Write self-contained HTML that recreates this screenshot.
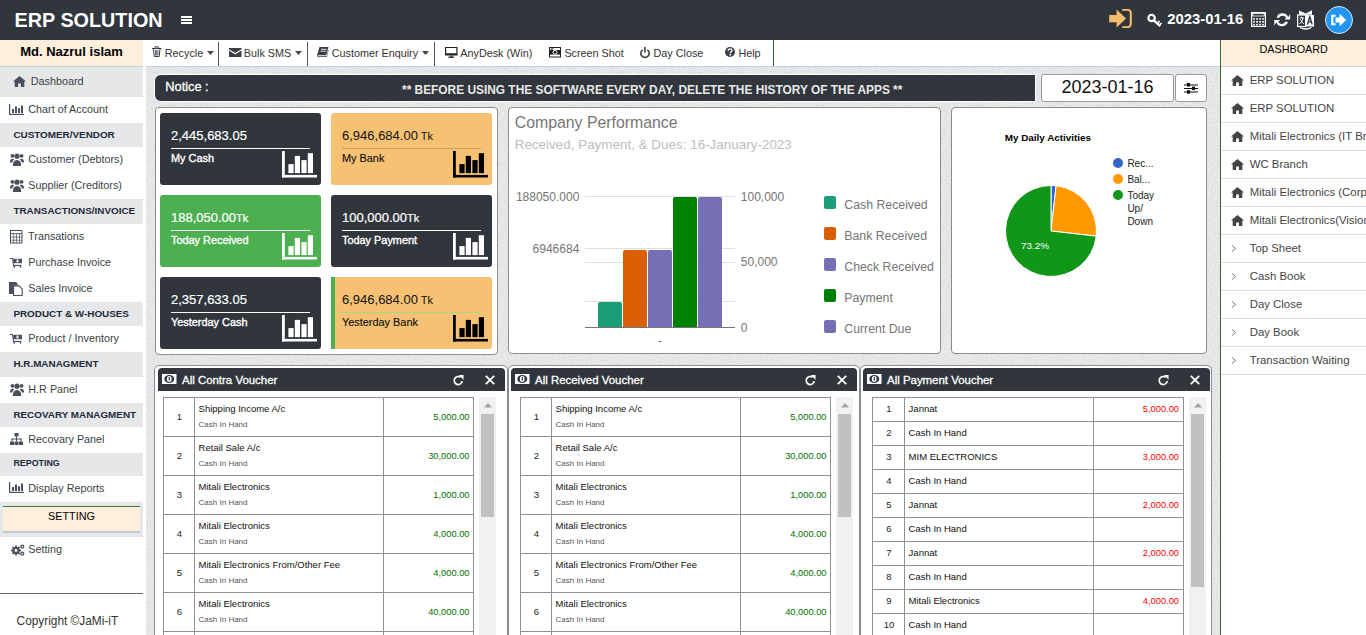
<!DOCTYPE html>
<html><head><meta charset="utf-8"><style>
*{box-sizing:border-box;margin:0;padding:0}
html,body{width:1366px;height:635px;overflow:hidden;background:#fff;font-family:"Liberation Sans",sans-serif;color:#333}
.a{position:absolute}
.t{position:absolute;white-space:nowrap}
svg{position:absolute;overflow:visible}
</style></head><body>
<div class="a" style="left:0px;top:0px;width:1366px;height:40px;background:#31363d"></div>
<div class="t" style="left:14.60px;top:7.74px;font-size:19.8px;line-height:25px;color:#fff;font-weight:bold;">ERP SOLUTION</div>
<div class="a" style="left:181px;top:16px;width:11px;height:2px;background:#fff"></div>
<div class="a" style="left:181px;top:19px;width:11px;height:2px;background:#fff"></div>
<div class="a" style="left:181px;top:22px;width:11px;height:2px;background:#fff"></div>
<svg class="a" style="left:1108.8px;top:9px;" width="23.5" height="19.5" viewBox="0 0 23.5 19.5"><g fill="#f5bd6c"><path d="M0.2 6 L7.6 6 L7.6 0.5 L17 9.5 L7.6 18.5 L7.6 13.3 L0.2 13.3 Z"/><path d="M13.2 0 L18.5 0 Q22.8 0 22.8 4.2 L22.8 14.8 Q22.8 19 18.5 19 L13.2 19 L13.2 17.2 L18.5 17.2 Q20.8 17.2 20.8 14.8 L20.8 4.2 Q20.8 1.8 18.5 1.8 L13.2 1.8 Z"/></g></svg>
<svg class="a" style="left:1146.7px;top:12.8px;" width="16" height="14" viewBox="0 0 16 14"><g fill="none" stroke="#fff"><circle cx="4.6" cy="5" r="3.2" stroke-width="2.2"/><path d="M7 7.4 L13.2 13.2" stroke-width="2.4"/><path d="M10.2 10.4 L12.6 8.2 M12.2 12.2 L14.6 10" stroke-width="1.6"/></g><circle cx="3.9" cy="4.3" r="1" fill="#31363d"/></svg>
<div class="t" style="left:1167.20px;top:10.25px;font-size:14.86px;line-height:19px;color:#fff;font-weight:bold;">2023-01-16</div>
<svg class="a" style="left:1251px;top:12px;" width="15" height="15" viewBox="0 0 15 15"><rect x="0.6" y="0.6" width="13.8" height="13.8" fill="none" stroke="#fff" stroke-width="1.2"/><rect x="1.2" y="1.2" width="12.6" height="3.2" fill="#fff"/><rect x="2.2" y="2" width="10.6" height="1.6" fill="#31363d"/><rect x="2.2" y="6.2" width="1.7" height="1.6" fill="#fff"/><rect x="2.2" y="9.0" width="1.7" height="1.6" fill="#fff"/><rect x="2.2" y="11.8" width="1.7" height="1.6" fill="#fff"/><rect x="5.2" y="6.2" width="1.7" height="1.6" fill="#fff"/><rect x="5.2" y="9.0" width="1.7" height="1.6" fill="#fff"/><rect x="5.2" y="11.8" width="1.7" height="1.6" fill="#fff"/><rect x="8.2" y="6.2" width="1.7" height="1.6" fill="#fff"/><rect x="8.2" y="9.0" width="1.7" height="1.6" fill="#fff"/><rect x="8.2" y="11.8" width="1.7" height="1.6" fill="#fff"/><rect x="11.2" y="6.2" width="1.7" height="1.6" fill="#fff"/><rect x="11.2" y="9.0" width="1.7" height="1.6" fill="#fff"/><rect x="11.2" y="11.8" width="1.7" height="1.6" fill="#fff"/></svg>
<svg class="a" style="left:1274px;top:11.7px;" width="16.5" height="15.6" viewBox="0 0 16.5 15.6"><g fill="#fff"><path d="M14.3 5.3 A6.3 6.3 0 0 0 2.5 5.5 L5 6 A4 4 0 0 1 12.2 5.9 L10.4 7.6 L16.2 7.6 L16.2 1.8 Z"/><path d="M2.2 10.3 A6.3 6.3 0 0 0 14 10.1 L11.5 9.6 A4 4 0 0 1 4.3 9.7 L6.1 8 L0.3 8 L0.3 13.8 Z"/></g></svg>
<svg class="a" style="left:1297px;top:10px;" width="17.5" height="19.5" viewBox="0 0 17.5 19.5"><path fill="#fff" d="M2 0.5 L8.7 3.6 L15 0.3 L15 4.8 L2 4.8 Z"/><rect x="0.6" y="5" width="8" height="11.5" fill="none" stroke="#fff" stroke-width="1.2"/><rect x="8.6" y="5" width="8.4" height="11.5" fill="#fff"/><path fill="none" stroke="#31363d" stroke-width="1.3" d="M10.4 14.5 L12.8 6.8 L15.2 14.5 M11.2 11.8 L14.4 11.8"/><path fill="none" stroke="#fff" stroke-width="1" d="M2.5 8 L6.8 8 M4.6 6.6 L4.6 8 M6 8 Q5 12.5 2.5 14 M3.3 9.5 Q4.8 12.8 6.8 13.8"/><path fill="none" stroke="#fff" stroke-width="1.3" d="M3 17.5 Q8.8 20.5 14.5 17.5"/></svg>
<svg class="a" style="left:1325px;top:5.5px;" width="28" height="28" viewBox="0 0 28 28"><circle cx="14" cy="14" r="13.5" fill="#2196f3" stroke="#e8f2fb" stroke-width="0.9"/><g fill="#fff"><path d="M6.2 8.8 L10.5 8.8 L10.5 10.8 L8.4 10.8 L8.4 17.2 L10.5 17.2 L10.5 19.2 L6.2 19.2 Z"/><path d="M10.5 11.6 L14.6 11.6 L14.6 7.8 L21.2 14 L14.6 20.2 L14.6 16.4 L10.5 16.4 Z"/></g></svg>
<div class="a" style="left:0px;top:40px;width:143px;height:595px;background:#fff"></div>
<div class="a" style="left:0px;top:40px;width:143px;height:26px;background:#fdefdc"></div>
<div class="a" style="left:0px;top:66px;width:143px;height:1px;background:#c9d0dd"></div>
<div class="t" style="left:-228.50px;width:600px;text-align:center;top:44.29px;font-size:13px;line-height:16px;color:#000;font-weight:bold;">Md. Nazrul islam</div>
<div class="a" style="left:0px;top:67px;width:143px;height:30px;background:#e6e7e8"></div>
<svg class="a" style="left:13px;top:76px;" width="13" height="11" viewBox="0 0 13 11"><path fill="#4a5059" d="M6.5 0 L13 5.6 L11.3 5.6 L11.3 11 L7.9 11 L7.9 7.5 L5.1 7.5 L5.1 11 L1.7 11 L1.7 5.6 L0 5.6 Z"/></svg>
<div class="t" style="left:30.70px;top:74.06px;font-size:10.8px;line-height:14px;color:#3a3f45;">Dashboard</div>
<svg class="a" style="left:9px;top:104px;" width="15" height="11" viewBox="0 0 15 11"><g fill="#4a5059"><rect x="0" y="0" width="1.2" height="11"/><rect x="0" y="9.8" width="15" height="1.2"/><rect x="3" y="5" width="2" height="4"/><rect x="6" y="2.5" width="2" height="6.5"/><rect x="9" y="4.2" width="2" height="4.8"/><rect x="12" y="1.5" width="2" height="7.5"/></g></svg>
<div class="t" style="left:28.30px;top:101.96px;font-size:10.8px;line-height:14px;color:#3a3f45;">Chart of Account</div>
<div class="a" style="left:0px;top:123px;width:143px;height:24px;background:#e6e7e8"></div>
<div class="t" style="left:13.40px;top:128.67px;font-size:9.9px;line-height:12px;color:#1d2a3a;font-weight:bold;">CUSTOMER/VENDOR</div>
<svg class="a" style="left:9.8px;top:152.8px;" width="14" height="13" viewBox="0 0 14 13"><g fill="#4a5059"><circle cx="7" cy="3.2" r="2.6"/><path d="M2.8 13 Q2.8 7 7 7 Q11.2 7 11.2 13 Z"/><circle cx="2.4" cy="2.8" r="1.9"/><circle cx="11.6" cy="2.8" r="1.9"/><path d="M0 9.5 Q0 5.8 2.6 5.8 Q3.8 5.8 4.2 6.4 Q2.4 7.6 2.2 9.5 Z"/><path d="M14 9.5 Q14 5.8 11.4 5.8 Q10.2 5.8 9.8 6.4 Q11.6 7.6 11.8 9.5 Z"/></g></svg>
<div class="t" style="left:28.30px;top:151.86px;font-size:10.8px;line-height:14px;color:#3a3f45;">Customer (Debtors)</div>
<svg class="a" style="left:9.8px;top:178.7px;" width="14" height="13" viewBox="0 0 14 13"><g fill="#4a5059"><circle cx="7" cy="3.2" r="2.6"/><path d="M2.8 13 Q2.8 7 7 7 Q11.2 7 11.2 13 Z"/><circle cx="2.4" cy="2.8" r="1.9"/><circle cx="11.6" cy="2.8" r="1.9"/><path d="M0 9.5 Q0 5.8 2.6 5.8 Q3.8 5.8 4.2 6.4 Q2.4 7.6 2.2 9.5 Z"/><path d="M14 9.5 Q14 5.8 11.4 5.8 Q10.2 5.8 9.8 6.4 Q11.6 7.6 11.8 9.5 Z"/></g></svg>
<div class="t" style="left:28.30px;top:177.76px;font-size:10.8px;line-height:14px;color:#3a3f45;">Supplier (Creditors)</div>
<div class="a" style="left:0px;top:199px;width:143px;height:25px;background:#e6e7e8"></div>
<div class="t" style="left:13.40px;top:205.07px;font-size:9.9px;line-height:12px;color:#1d2a3a;font-weight:bold;">TRANSACTIONS/INVOICE</div>
<svg class="a" style="left:9.7px;top:229.7px;" width="13" height="14" viewBox="0 0 13 14"><rect x="0.5" y="0.5" width="11.5" height="12.5" fill="none" stroke="#4a5059" stroke-width="1"/><rect x="0.5" y="3.2" width="11.5" height="0.9" fill="#4a5059"/><rect x="0.5" y="6.7" width="11.5" height="0.7" fill="#4a5059"/><rect x="0.5" y="9.8" width="11.5" height="0.7" fill="#4a5059"/><rect x="3.4" y="3.6" width="0.7" height="9.4" fill="#4a5059"/><rect x="6.2" y="3.6" width="0.7" height="9.4" fill="#4a5059"/><rect x="9.1" y="3.6" width="0.7" height="9.4" fill="#4a5059"/></svg>
<div class="t" style="left:28.10px;top:229.06px;font-size:10.8px;line-height:14px;color:#3a3f45;">Transations</div>
<svg class="a" style="left:10px;top:258px;" width="13" height="11" viewBox="0 0 13 11"><g fill="#4a5059"><path d="M0 0 L2.9 0 L4.2 8.4 L3.2 8.4 L2.1 1 L0 1 Z"/><rect x="3.2" y="0.8" width="8.8" height="4.4"/><rect x="3.6" y="6.9" width="7.6" height="1.1"/><rect x="3.6" y="7.5" width="1.3" height="2.2"/><rect x="9.9" y="7.5" width="1.3" height="2.2"/></g><ellipse cx="7.5" cy="3" rx="1.3" ry="1.7" fill="#d8dde2"/></svg>
<div class="t" style="left:28.30px;top:255.16px;font-size:10.8px;line-height:14px;color:#3a3f45;">Purchase Invoice</div>
<svg class="a" style="left:9.4px;top:282px;" width="14" height="14" viewBox="0 0 14 14"><path fill="#4a5059" d="M0 0 L7 0 L8.5 1.5 L8.5 3.5 L4 3.5 L4 12 L0 12 Z"/><path fill="#fff" stroke="#4a5059" stroke-width="1.1" d="M4.6 3.9 L10 3.9 L13.2 7.1 L13.2 13.5 L4.6 13.5 Z"/></svg>
<div class="t" style="left:28.30px;top:280.86px;font-size:10.8px;line-height:14px;color:#3a3f45;">Sales Invoice</div>
<div class="a" style="left:0px;top:302px;width:143px;height:24px;background:#e6e7e8"></div>
<div class="t" style="left:13.40px;top:308.07px;font-size:9.9px;line-height:12px;color:#1d2a3a;font-weight:bold;">PRODUCT &amp; W-HOUSES</div>
<svg class="a" style="left:10px;top:334px;" width="13" height="11" viewBox="0 0 13 11"><g fill="#4a5059"><path d="M0 0 L2.9 0 L4.2 8.4 L3.2 8.4 L2.1 1 L0 1 Z"/><rect x="3.2" y="0.8" width="8.8" height="4.4"/><rect x="3.6" y="6.9" width="7.6" height="1.1"/><rect x="3.6" y="7.5" width="1.3" height="2.2"/><rect x="9.9" y="7.5" width="1.3" height="2.2"/></g><ellipse cx="7.5" cy="3" rx="1.3" ry="1.7" fill="#d8dde2"/></svg>
<div class="t" style="left:28.30px;top:331.16px;font-size:10.8px;line-height:14px;color:#3a3f45;">Product / Inventory</div>
<div class="a" style="left:0px;top:352px;width:143px;height:25px;background:#e6e7e8"></div>
<div class="t" style="left:13.40px;top:358.17px;font-size:9.9px;line-height:12px;color:#1d2a3a;font-weight:bold;">H.R.MANAGMENT</div>
<svg class="a" style="left:9.8px;top:383px;" width="14" height="13" viewBox="0 0 14 13"><g fill="#4a5059"><circle cx="7" cy="3.2" r="2.6"/><path d="M2.8 13 Q2.8 7 7 7 Q11.2 7 11.2 13 Z"/><circle cx="2.4" cy="2.8" r="1.9"/><circle cx="11.6" cy="2.8" r="1.9"/><path d="M0 9.5 Q0 5.8 2.6 5.8 Q3.8 5.8 4.2 6.4 Q2.4 7.6 2.2 9.5 Z"/><path d="M14 9.5 Q14 5.8 11.4 5.8 Q10.2 5.8 9.8 6.4 Q11.6 7.6 11.8 9.5 Z"/></g></svg>
<div class="t" style="left:28.30px;top:382.26px;font-size:10.8px;line-height:14px;color:#3a3f45;">H.R Panel</div>
<div class="a" style="left:0px;top:403px;width:143px;height:24px;background:#e6e7e8"></div>
<div class="t" style="left:13.40px;top:408.87px;font-size:9.9px;line-height:12px;color:#1d2a3a;font-weight:bold;">RECOVARY MANAGMENT</div>
<svg class="a" style="left:9.5px;top:433px;" width="13" height="12" viewBox="0 0 13 12"><g fill="#4a5059"><rect x="4.5" y="0" width="4" height="3.5"/><rect x="6" y="3.5" width="1" height="2.5"/><rect x="1.5" y="5.5" width="10" height="1"/><rect x="1.5" y="5.5" width="1" height="3"/><rect x="6" y="5.5" width="1" height="3"/><rect x="10.5" y="5.5" width="1" height="3"/><rect x="0" y="8.5" width="4" height="3.5"/><rect x="4.5" y="8.5" width="4" height="3.5"/><rect x="9" y="8.5" width="4" height="3.5"/></g></svg>
<div class="t" style="left:28.30px;top:432.46px;font-size:10.8px;line-height:14px;color:#3a3f45;">Recovary Panel</div>
<div class="a" style="left:0px;top:453px;width:143px;height:23px;background:#e6e7e8"></div>
<div class="t" style="left:13.40px;top:458.31px;font-size:8.9px;line-height:11px;color:#1d2a3a;font-weight:bold;">REPOTING</div>
<svg class="a" style="left:9px;top:482px;" width="15" height="11" viewBox="0 0 15 11"><g fill="#4a5059"><rect x="0" y="0" width="1.2" height="11"/><rect x="0" y="9.8" width="15" height="1.2"/><rect x="3" y="5" width="2" height="4"/><rect x="6" y="2.5" width="2" height="6.5"/><rect x="9" y="4.2" width="2" height="4.8"/><rect x="12" y="1.5" width="2" height="7.5"/></g></svg>
<div class="t" style="left:28.30px;top:481.06px;font-size:10.8px;line-height:14px;color:#3a3f45;">Display Reports</div>
<div class="a" style="left:0px;top:502px;width:143px;height:35px;background:#e6e7e8"></div>
<div class="a" style="left:3px;top:506px;width:137px;height:27px;background:#fdefdc;border-top:1px solid #3c763d;border-bottom:2px solid #c5c9d2"></div>
<div class="t" style="left:-228.50px;width:600px;text-align:center;top:509.46px;font-size:10.8px;line-height:14px;color:#000;">SETTING</div>
<svg class="a" style="left:10.7px;top:543.5px;" width="14" height="12" viewBox="0 0 14 12"><g fill="#4a5059"><circle cx="5" cy="6.5" r="3.6"/><g stroke="#4a5059" stroke-width="1.8"><line x1="5" y1="1.5" x2="5" y2="11.5"/><line x1="0" y1="6.5" x2="10" y2="6.5"/><line x1="1.5" y1="3" x2="8.5" y2="10"/><line x1="8.5" y1="3" x2="1.5" y2="10"/></g><circle cx="5" cy="6.5" r="1.4" fill="#fff"/><circle cx="11.3" cy="2.6" r="2.1"/><circle cx="11.3" cy="2.6" r="0.8" fill="#fff"/><circle cx="11.3" cy="9.6" r="2.1"/><circle cx="11.3" cy="9.6" r="0.8" fill="#fff"/></g></svg>
<div class="t" style="left:28.30px;top:542.26px;font-size:10.8px;line-height:14px;color:#3a3f45;">Setting</div>
<div class="a" style="left:0px;top:593px;width:143px;height:1px;background:#666"></div>
<div class="t" style="left:16.60px;top:613.59px;font-size:11.85px;line-height:15px;color:#333;">Copyright ©JaMi-iT</div>
<div class="a" style="left:143px;top:40px;width:3px;height:595px;background:#fff"></div>
<div class="a" style="left:146px;top:40px;width:628px;height:26px;background:#fff"></div>
<div class="a" style="left:773px;top:40px;width:1px;height:26px;background:#2f6b32"></div>
<div class="a" style="left:774px;top:40px;width:445px;height:26px;background:#fff"></div>
<svg class="a" style="left:152px;top:46px;" width="9" height="11" viewBox="0 0 9 11"><g fill="none" stroke="#3a3f45" stroke-width="1"><path d="M1.5 3 L2.3 10.5 L7.2 10.5 L8 3"/><line x1="0" y1="2.5" x2="9.5" y2="2.5"/><path d="M3.2 2.5 L3.2 0.8 L6.3 0.8 L6.3 2.5"/></g><g stroke="#3a3f45" stroke-width="0.8"><line x1="3.6" y1="4" x2="3.6" y2="9.5"/><line x1="4.75" y1="4" x2="4.75" y2="9.5"/><line x1="5.9" y1="4" x2="5.9" y2="9.5"/></g></svg>
<div class="t" style="left:164.80px;top:46.26px;font-size:10.8px;line-height:14px;color:#333;">Recycle</div>
<svg class="a" style="left:206.5px;top:51px;" width="7" height="4" viewBox="0 0 7 4"><path fill="#444" d="M0 0 L7 0 L3.5 4 Z"/></svg>
<div class="a" style="left:218px;top:42px;width:1px;height:24px;background:#555"></div>
<svg class="a" style="left:228.5px;top:48px;" width="12.5" height="9" viewBox="0 0 12.5 9"><path fill="#3a3f45" d="M0 0 L12.5 0 L12.5 1.2 L6.25 5 L0 1.2 Z M0 2.6 L6.25 6.5 L12.5 2.6 L12.5 9 L0 9 Z"/></svg>
<div class="t" style="left:243.80px;top:46.26px;font-size:10.8px;line-height:14px;color:#333;">Bulk SMS</div>
<svg class="a" style="left:295px;top:51px;" width="7" height="4" viewBox="0 0 7 4"><path fill="#444" d="M0 0 L7 0 L3.5 4 Z"/></svg>
<div class="a" style="left:307px;top:42px;width:1px;height:24px;background:#555"></div>
<svg class="a" style="left:317px;top:47px;" width="11.5" height="10" viewBox="0 0 11.5 10"><path fill="#3a3f45" d="M2.5 0 L11.5 0 L9.2 8.2 L1.2 8.2 Q0.6 8.8 1.2 9.2 L9.6 9.2 L11.2 3 L11.5 3.5 L9.9 10 L0.8 10 Q-0.4 9.4 0.2 7.8 Z"/><g stroke="#fff" stroke-width="0.8"><line x1="4" y1="2.3" x2="9.5" y2="2.3"/><line x1="3.5" y1="4.2" x2="9" y2="4.2"/></g></svg>
<div class="t" style="left:331.70px;top:46.26px;font-size:10.8px;line-height:14px;color:#333;">Customer Enquiry</div>
<svg class="a" style="left:422px;top:51px;" width="7" height="4" viewBox="0 0 7 4"><path fill="#444" d="M0 0 L7 0 L3.5 4 Z"/></svg>
<div class="a" style="left:434px;top:42px;width:1px;height:24px;background:#555"></div>
<svg class="a" style="left:444.5px;top:47px;" width="12.5" height="11" viewBox="0 0 12.5 11"><g fill="#222"><path d="M0 0 L12.5 0 L12.5 8.6 L0 8.6 Z M1.2 1.1 L1.2 6.2 L11.3 6.2 L11.3 1.1 Z"/><rect x="5.2" y="8.6" width="2.1" height="1.2"/><rect x="3.4" y="9.6" width="5.7" height="1.3"/></g></svg>
<div class="t" style="left:460.30px;top:46.26px;font-size:10.8px;line-height:14px;color:#333;">AnyDesk (Win)</div>
<svg class="a" style="left:549px;top:47px;" width="12" height="10.5" viewBox="0 0 12 10.5"><rect x="0" y="0" width="12" height="10.5" fill="#222"/><rect x="1" y="1" width="10" height="8.5" fill="#fff"/><rect x="1" y="3" width="10" height="4.6" fill="#222"/><rect x="1.8" y="1.4" width="2.5" height="1.2" fill="#222"/><circle cx="6" cy="5.3" r="2.4" fill="#fff"/><circle cx="6" cy="5.3" r="1.5" fill="#222"/></svg>
<div class="t" style="left:564.40px;top:46.26px;font-size:10.8px;line-height:14px;color:#333;">Screen Shot</div>
<svg class="a" style="left:640px;top:46.5px;" width="10" height="11" viewBox="0 0 10 11"><g fill="none" stroke="#3a3f45" stroke-width="1.6"><path d="M2.7 2.8 A4.2 4.2 0 1 0 7.3 2.8"/><line x1="5" y1="0" x2="5" y2="5.5"/></g></svg>
<div class="t" style="left:653.50px;top:46.26px;font-size:10.8px;line-height:14px;color:#333;">Day Close</div>
<svg class="a" style="left:725.2px;top:47px;" width="10" height="10" viewBox="0 0 10 10"><circle cx="5" cy="5" r="5" fill="#3a3f45"/><path d="M3.2 3.8 Q3.2 1.9 5.1 1.9 Q6.9 1.9 6.9 3.6 Q6.9 4.6 5.9 5.1 Q5.3 5.4 5.3 6.2" fill="none" stroke="#fff" stroke-width="1.4"/><rect x="4.5" y="7" width="1.6" height="1.5" fill="#fff"/></svg>
<div class="t" style="left:738.40px;top:46.26px;font-size:10.8px;line-height:14px;color:#333;">Help</div>
<div class="a" style="left:146px;top:66px;width:1074px;height:1px;background:#c5cde0"></div>
<div class="a" style="left:146px;top:67px;width:1074px;height:568px;background:#e9eaec"></div>
<svg class="a" style="left:146px;top:67px;overflow:hidden;" width="1074" height="568" viewBox="0 0 1074 568"><filter id="nz" x="0" y="0" width="100%" height="100%"><feTurbulence type="fractalNoise" baseFrequency="0.55" numOctaves="2" seed="3"/><feColorMatrix type="matrix" values="0 0 0 0 0.5  0 0 0 0 0.5  0 0 0 0 0.52  0.9 0 0 0 -0.36"/></filter><rect width="1074" height="568" fill="#fff" filter="url(#nz)" opacity="0.9"/></svg>
<div class="a" style="left:154px;top:74px;width:882px;height:28px;background:#31363d;border:1px solid #fff;border-radius:7px 0 0 7px"></div>
<div class="t" style="left:165.30px;top:78.96px;font-size:12.8px;line-height:16px;color:#fff;-webkit-text-stroke:0.3px #fff;">Notice :</div>
<div class="t" style="left:402.00px;top:82.67px;font-size:11.9px;line-height:15px;color:#e8e8e8;font-weight:bold;">** BEFORE USING THE SOFTWARE EVERY DAY, DELETE THE HISTORY OF THE APPS **</div>
<div class="a" style="left:1041px;top:74px;width:133px;height:28px;background:#fff;border:1px solid #9a9a9a;border-radius:3px"></div>
<div class="t" style="left:807.50px;width:600px;text-align:center;top:76.26px;font-size:18px;line-height:22px;color:#111;">2023-01-16</div>
<div class="a" style="left:1175px;top:74px;width:32px;height:28px;background:#fff;border:1px solid #9a9a9a;border-radius:3px"></div>
<svg class="a" style="left:1184px;top:83px;" width="14" height="11" viewBox="0 0 14 11"><g fill="#111"><rect x="0" y="1.5" width="14" height="1"/><rect x="0" y="5" width="14" height="1"/><rect x="0" y="8.5" width="14" height="1"/><rect x="3" y="0" width="3" height="3.5"/><rect x="8" y="3.6" width="3" height="3.5"/><rect x="3" y="7.2" width="3" height="3.5"/></g></svg>
<div class="a" style="left:155px;top:107px;width:343px;height:248px;background:#fff;border:1px solid #8a8d90;border-radius:4px"></div>
<div class="a" style="left:508px;top:107px;width:433px;height:247px;background:#fff;border:1px solid #8a8d90;border-radius:4px"></div>
<div class="a" style="left:951px;top:107px;width:256px;height:247px;background:#fff;border:1px solid #8a8d90;border-radius:4px"></div>
<div class="a" style="left:160px;top:113px;width:161px;height:72px;background:#31363d;border-radius:3px"></div>
<div class="t" style="left:171.00px;top:127.69px;font-size:13px;line-height:16px;color:#fff;-webkit-text-stroke:0.2px #fff;">2,445,683.05</div>
<div class="a" style="left:171px;top:148px;width:139px;height:1px;background:#fff"></div>
<div class="t" style="left:171.00px;top:151.22px;font-size:10.9px;line-height:14px;color:#fff;-webkit-text-stroke:0.35px #fff;">My Cash</div>
<svg class="a" style="left:282px;top:151px;" width="35" height="27" viewBox="0 0 35 27"><g fill="#fff"><rect x="0" y="0" width="2.8" height="26.5"/><rect x="0" y="23.9" width="35" height="2.6"/><rect x="6.4" y="13.1" width="5.2" height="9"/><rect x="12.8" y="4.9" width="5.2" height="17.2"/><rect x="19.4" y="9.1" width="5.2" height="13"/><rect x="25.8" y="2.2" width="5.2" height="19.9"/></g></svg>
<div class="a" style="left:331px;top:113px;width:161px;height:72px;background:#f6c173;border-radius:3px"></div>
<div class="t" style="left:342.00px;top:127.69px;font-size:13px;line-height:16px;color:#111;">6,946,684.00<span style="font-size:11px"> Tk</span></div>
<div class="a" style="left:342px;top:148px;width:139px;height:1px;background:#c9a068"></div>
<div class="t" style="left:342.00px;top:151.22px;font-size:10.9px;line-height:14px;color:#111;-webkit-text-stroke:0.15px #111;">My Bank</div>
<svg class="a" style="left:453px;top:151px;" width="35" height="27" viewBox="0 0 35 27"><g fill="#000"><rect x="0" y="0" width="2.8" height="26.5"/><rect x="0" y="23.9" width="35" height="2.6"/><rect x="6.4" y="13.1" width="5.2" height="9"/><rect x="12.8" y="4.9" width="5.2" height="17.2"/><rect x="19.4" y="9.1" width="5.2" height="13"/><rect x="25.8" y="2.2" width="5.2" height="19.9"/></g></svg>
<div class="a" style="left:160px;top:195px;width:161px;height:72px;background:#4caf50;border-radius:3px"></div>
<div class="t" style="left:171.00px;top:209.69px;font-size:13px;line-height:16px;color:#fff;-webkit-text-stroke:0.2px #fff;">188,050.00<span style="font-size:11px">Tk</span></div>
<div class="a" style="left:171px;top:230px;width:139px;height:1px;background:#fff"></div>
<div class="t" style="left:171.00px;top:233.22px;font-size:10.9px;line-height:14px;color:#fff;-webkit-text-stroke:0.35px #fff;">Today Received</div>
<svg class="a" style="left:282px;top:233px;" width="35" height="27" viewBox="0 0 35 27"><g fill="#fff"><rect x="0" y="0" width="2.8" height="26.5"/><rect x="0" y="23.9" width="35" height="2.6"/><rect x="6.4" y="13.1" width="5.2" height="9"/><rect x="12.8" y="4.9" width="5.2" height="17.2"/><rect x="19.4" y="9.1" width="5.2" height="13"/><rect x="25.8" y="2.2" width="5.2" height="19.9"/></g></svg>
<div class="a" style="left:331px;top:195px;width:161px;height:72px;background:#31363d;border-radius:3px"></div>
<div class="t" style="left:342.00px;top:209.69px;font-size:13px;line-height:16px;color:#fff;-webkit-text-stroke:0.2px #fff;">100,000.00<span style="font-size:11px">Tk</span></div>
<div class="a" style="left:342px;top:230px;width:139px;height:1px;background:#fff"></div>
<div class="t" style="left:342.00px;top:233.22px;font-size:10.9px;line-height:14px;color:#fff;-webkit-text-stroke:0.35px #fff;">Today Payment</div>
<svg class="a" style="left:453px;top:233px;" width="35" height="27" viewBox="0 0 35 27"><g fill="#fff"><rect x="0" y="0" width="2.8" height="26.5"/><rect x="0" y="23.9" width="35" height="2.6"/><rect x="6.4" y="13.1" width="5.2" height="9"/><rect x="12.8" y="4.9" width="5.2" height="17.2"/><rect x="19.4" y="9.1" width="5.2" height="13"/><rect x="25.8" y="2.2" width="5.2" height="19.9"/></g></svg>
<div class="a" style="left:160px;top:277px;width:161px;height:72px;background:#31363d;border-radius:3px"></div>
<div class="t" style="left:171.00px;top:291.69px;font-size:13px;line-height:16px;color:#fff;-webkit-text-stroke:0.2px #fff;">2,357,633.05</div>
<div class="a" style="left:171px;top:312px;width:139px;height:1px;background:#fff"></div>
<div class="t" style="left:171.00px;top:315.22px;font-size:10.9px;line-height:14px;color:#fff;-webkit-text-stroke:0.35px #fff;">Yesterday Cash</div>
<svg class="a" style="left:282px;top:315px;" width="35" height="27" viewBox="0 0 35 27"><g fill="#fff"><rect x="0" y="0" width="2.8" height="26.5"/><rect x="0" y="23.9" width="35" height="2.6"/><rect x="6.4" y="13.1" width="5.2" height="9"/><rect x="12.8" y="4.9" width="5.2" height="17.2"/><rect x="19.4" y="9.1" width="5.2" height="13"/><rect x="25.8" y="2.2" width="5.2" height="19.9"/></g></svg>
<div class="a" style="left:331px;top:277px;width:161px;height:72px;background:#f6c173;border-radius:3px"></div>
<div class="a" style="left:331px;top:277px;width:4px;height:72px;background:#4caf50"></div>
<div class="t" style="left:342.00px;top:291.69px;font-size:13px;line-height:16px;color:#111;">6,946,684.00<span style="font-size:11px"> Tk</span></div>
<div class="a" style="left:342px;top:312px;width:139px;height:1px;background:#a8d88a"></div>
<div class="t" style="left:342.00px;top:315.22px;font-size:10.9px;line-height:14px;color:#111;-webkit-text-stroke:0.15px #111;">Yesterday Bank</div>
<svg class="a" style="left:453px;top:315px;" width="35" height="27" viewBox="0 0 35 27"><g fill="#000"><rect x="0" y="0" width="2.8" height="26.5"/><rect x="0" y="23.9" width="35" height="2.6"/><rect x="6.4" y="13.1" width="5.2" height="9"/><rect x="12.8" y="4.9" width="5.2" height="17.2"/><rect x="19.4" y="9.1" width="5.2" height="13"/><rect x="25.8" y="2.2" width="5.2" height="19.9"/></g></svg>
<div class="t" style="left:514.70px;top:112.50px;font-size:15.85px;line-height:20px;color:#757575;">Company Performance</div>
<div class="t" style="left:514.70px;top:135.84px;font-size:13.45px;line-height:17px;color:#bdbdbd;">Received, Payment, &amp; Dues: 16-January-2023</div>
<div class="a" style="left:585px;top:196px;width:150px;height:1px;background:#e0e0e0"></div>
<div class="a" style="left:585px;top:248px;width:150px;height:1px;background:#e0e0e0"></div>
<div class="a" style="left:585px;top:301px;width:150px;height:1px;background:#e0e0e0"></div>
<div class="a" style="left:585px;top:261.5px;width:150px;height:1px;background:#e0e0e0"></div>
<div class="a" style="left:585px;top:327px;width:150px;height:1px;background:#757575"></div>
<div class="t" style="right:786.70px;text-align:right;top:189.64px;font-size:12px;line-height:15px;color:#757575;">188050.000</div>
<div class="t" style="right:786.70px;text-align:right;top:241.64px;font-size:12px;line-height:15px;color:#757575;">6946684</div>
<div class="t" style="left:740.80px;top:189.84px;font-size:12px;line-height:15px;color:#757575;">100,000</div>
<div class="t" style="left:740.80px;top:255.14px;font-size:12px;line-height:15px;color:#757575;">50,000</div>
<div class="t" style="left:740.80px;top:320.74px;font-size:12px;line-height:15px;color:#757575;">0</div>
<div class="a" style="left:598px;top:301.5px;width:24px;height:25.5px;background:#1b9e77;border-radius:2px 2px 0 0"></div>
<div class="a" style="left:623px;top:249.5px;width:24px;height:77.5px;background:#d95f02;border-radius:2px 2px 0 0"></div>
<div class="a" style="left:648px;top:249.5px;width:24px;height:77.5px;background:#7570b3;border-radius:2px 2px 0 0"></div>
<div class="a" style="left:673px;top:197px;width:24px;height:130px;background:#008000;border-radius:2px 2px 0 0"></div>
<div class="a" style="left:698px;top:197px;width:24px;height:130px;background:#7570b3;border-radius:2px 2px 0 0"></div>
<div class="t" style="left:360.00px;width:600px;text-align:center;top:333.84px;font-size:12px;line-height:15px;color:#757575;">-</div>
<div class="a" style="left:823.6px;top:196.4px;width:12.5px;height:12.5px;background:#1b9e77;border-radius:2px"></div>
<div class="t" style="left:844.30px;top:197.64px;font-size:12.3px;line-height:15px;color:#757575;">Cash Received</div>
<div class="a" style="left:823.6px;top:227.4px;width:12.5px;height:12.5px;background:#d95f02;border-radius:2px"></div>
<div class="t" style="left:844.30px;top:228.64px;font-size:12.3px;line-height:15px;color:#757575;">Bank Received</div>
<div class="a" style="left:823.6px;top:258.4px;width:12.5px;height:12.5px;background:#7570b3;border-radius:2px"></div>
<div class="t" style="left:844.30px;top:259.64px;font-size:12.3px;line-height:15px;color:#757575;">Check Received</div>
<div class="a" style="left:823.6px;top:289.4px;width:12.5px;height:12.5px;background:#008000;border-radius:2px"></div>
<div class="t" style="left:844.30px;top:290.64px;font-size:12.3px;line-height:15px;color:#757575;">Payment</div>
<div class="a" style="left:823.6px;top:320.4px;width:12.5px;height:12.5px;background:#7570b3;border-radius:2px"></div>
<div class="t" style="left:844.30px;top:321.64px;font-size:12.3px;line-height:15px;color:#757575;">Current Due</div>
<div class="t" style="left:1004.70px;top:131.97px;font-size:9.9px;line-height:12px;color:#000;font-weight:bold;">My Daily Activities</div>
<svg class="a" style="left:1001px;top:180.5px;" width="100" height="100" viewBox="0 0 100 100"><path d="M50 50 L50.00 4.50 A45.5 45.5 0 0 1 55.15 4.79 Z" fill="#3366cc" stroke="#fff" stroke-width="1"/><path d="M50 50 L55.15 4.79 A45.5 45.5 0 0 1 95.21 55.15 Z" fill="#ff9900" stroke="#fff" stroke-width="1"/><path d="M50 50 L95.21 55.15 A45.5 45.5 0 1 1 50.00 4.50 Z" fill="#109618" stroke="#fff" stroke-width="1"/></svg>
<div class="t" style="left:735.00px;width:600px;text-align:center;top:239.97px;font-size:9.9px;line-height:12px;color:#fff;">73.2%</div>
<svg class="a" style="left:1112.8px;top:157.9px;" width="10" height="10" viewBox="0 0 10 10"><circle cx="5" cy="5" r="5" fill="#3366cc"/></svg>
<div class="t" style="left:1127.40px;top:158.23px;font-size:10px;line-height:12px;color:#222;">Rec...</div>
<svg class="a" style="left:1112.8px;top:173.9px;" width="10" height="10" viewBox="0 0 10 10"><circle cx="5" cy="5" r="5" fill="#ff9900"/></svg>
<div class="t" style="left:1127.40px;top:174.23px;font-size:10px;line-height:12px;color:#222;">Bal...</div>
<svg class="a" style="left:1112.8px;top:189.9px;" width="10" height="10" viewBox="0 0 10 10"><circle cx="5" cy="5" r="5" fill="#109618"/></svg>
<div class="t" style="left:1127.40px;top:190.23px;font-size:10px;line-height:12px;color:#222;">Today</div>
<div class="t" style="left:1127.40px;top:203.33px;font-size:10px;line-height:12px;color:#222;">Up/</div>
<div class="t" style="left:1127.40px;top:216.33px;font-size:10px;line-height:12px;color:#222;">Down</div>
<div class="a" style="left:154px;top:365px;width:354px;height:280px;background:#fff;border:1px solid #8a8d90;border-radius:5px"></div>
<div class="a" style="left:158px;top:368px;width:347px;height:23px;background:#31363d;border-radius:4px 4px 0 0"></div>
<svg class="a" style="left:162px;top:374.2px;" width="14.5" height="10" viewBox="0 0 14.5 10"><rect x="0" y="0" width="14.5" height="10" fill="#fff"/><ellipse cx="7.25" cy="5" rx="5" ry="4" fill="#31363d"/><ellipse cx="7.25" cy="5" rx="2.4" ry="3" fill="#fff"/><rect x="6.7" y="3" width="1.2" height="3.6" fill="#31363d"/></svg>
<div class="t" style="left:182.00px;top:373.03px;font-size:11.45px;line-height:14px;color:#fff;-webkit-text-stroke:0.3px #fff;">All Contra Voucher</div>
<svg class="a" style="left:453px;top:374.5px;" width="11" height="11" viewBox="0 0 11 11"><path fill="none" stroke="#fff" stroke-width="1.7" d="M9.2 6 A4 4 0 1 1 7.6 2.3"/><path fill="#fff" d="M5.8 0 L10.5 0 L10.5 4.7 Z"/></svg>
<svg class="a" style="left:485px;top:375px;" width="10" height="10" viewBox="0 0 10 10"><path stroke="#fff" stroke-width="1.8" d="M0.8 0.8 L9.2 9.2 M9.2 0.8 L0.8 9.2"/></svg>
<div class="a" style="left:163px;top:397px;width:311px;height:40px;border:1px solid #8e9090"></div>
<div class="a" style="left:194px;top:397px;width:1px;height:39px;background:#8e9090"></div>
<div class="a" style="left:383px;top:397px;width:1px;height:39px;background:#8e9090"></div>
<div class="t" style="left:-120.50px;width:600px;text-align:center;top:410.71px;font-size:9.5px;line-height:12px;color:#222;">1</div>
<div class="t" style="left:198.60px;top:402.71px;font-size:9.5px;line-height:12px;color:#111;">Shipping Income A/c</div>
<div class="t" style="left:198.60px;top:420.03px;font-size:8px;line-height:10px;color:#555;">Cash In Hand</div>
<div class="t" style="right:896.50px;text-align:right;top:410.78px;font-size:9.3px;line-height:12px;color:#007000;">5,000.00</div>
<div class="a" style="left:163px;top:436px;width:311px;height:40px;border:1px solid #8e9090"></div>
<div class="a" style="left:194px;top:436px;width:1px;height:39px;background:#8e9090"></div>
<div class="a" style="left:383px;top:436px;width:1px;height:39px;background:#8e9090"></div>
<div class="t" style="left:-120.50px;width:600px;text-align:center;top:449.76px;font-size:9.5px;line-height:12px;color:#222;">2</div>
<div class="t" style="left:198.60px;top:441.76px;font-size:9.5px;line-height:12px;color:#111;">Retail Sale A/c</div>
<div class="t" style="left:198.60px;top:459.08px;font-size:8px;line-height:10px;color:#555;">Cash In Hand</div>
<div class="t" style="right:896.50px;text-align:right;top:449.83px;font-size:9.3px;line-height:12px;color:#007000;">30,000.00</div>
<div class="a" style="left:163px;top:475px;width:311px;height:40px;border:1px solid #8e9090"></div>
<div class="a" style="left:194px;top:475px;width:1px;height:39px;background:#8e9090"></div>
<div class="a" style="left:383px;top:475px;width:1px;height:39px;background:#8e9090"></div>
<div class="t" style="left:-120.50px;width:600px;text-align:center;top:488.81px;font-size:9.5px;line-height:12px;color:#222;">3</div>
<div class="t" style="left:198.60px;top:480.81px;font-size:9.5px;line-height:12px;color:#111;">Mitali Electronics</div>
<div class="t" style="left:198.60px;top:498.13px;font-size:8px;line-height:10px;color:#555;">Cash In Hand</div>
<div class="t" style="right:896.50px;text-align:right;top:488.88px;font-size:9.3px;line-height:12px;color:#007000;">1,000.00</div>
<div class="a" style="left:163px;top:514px;width:311px;height:40px;border:1px solid #8e9090"></div>
<div class="a" style="left:194px;top:514px;width:1px;height:39px;background:#8e9090"></div>
<div class="a" style="left:383px;top:514px;width:1px;height:39px;background:#8e9090"></div>
<div class="t" style="left:-120.50px;width:600px;text-align:center;top:527.86px;font-size:9.5px;line-height:12px;color:#222;">4</div>
<div class="t" style="left:198.60px;top:519.86px;font-size:9.5px;line-height:12px;color:#111;">Mitali Electronics</div>
<div class="t" style="left:198.60px;top:537.18px;font-size:8px;line-height:10px;color:#555;">Cash In Hand</div>
<div class="t" style="right:896.50px;text-align:right;top:527.93px;font-size:9.3px;line-height:12px;color:#007000;">4,000.00</div>
<div class="a" style="left:163px;top:553px;width:311px;height:40px;border:1px solid #8e9090"></div>
<div class="a" style="left:194px;top:553px;width:1px;height:39px;background:#8e9090"></div>
<div class="a" style="left:383px;top:553px;width:1px;height:39px;background:#8e9090"></div>
<div class="t" style="left:-120.50px;width:600px;text-align:center;top:566.91px;font-size:9.5px;line-height:12px;color:#222;">5</div>
<div class="t" style="left:198.60px;top:558.91px;font-size:9.5px;line-height:12px;color:#111;">Mitali Electronics From/Other Fee</div>
<div class="t" style="left:198.60px;top:576.23px;font-size:8px;line-height:10px;color:#555;">Cash In Hand</div>
<div class="t" style="right:896.50px;text-align:right;top:566.98px;font-size:9.3px;line-height:12px;color:#007000;">4,000.00</div>
<div class="a" style="left:163px;top:592px;width:311px;height:40px;border:1px solid #8e9090"></div>
<div class="a" style="left:194px;top:592px;width:1px;height:39px;background:#8e9090"></div>
<div class="a" style="left:383px;top:592px;width:1px;height:39px;background:#8e9090"></div>
<div class="t" style="left:-120.50px;width:600px;text-align:center;top:605.96px;font-size:9.5px;line-height:12px;color:#222;">6</div>
<div class="t" style="left:198.60px;top:597.96px;font-size:9.5px;line-height:12px;color:#111;">Mitali Electronics</div>
<div class="t" style="left:198.60px;top:615.28px;font-size:8px;line-height:10px;color:#555;">Cash In Hand</div>
<div class="t" style="right:896.50px;text-align:right;top:606.03px;font-size:9.3px;line-height:12px;color:#007000;">40,000.00</div>
<div class="a" style="left:163px;top:631px;width:311px;height:40px;border:1px solid #8e9090"></div>
<div class="a" style="left:194px;top:631px;width:1px;height:39px;background:#8e9090"></div>
<div class="a" style="left:383px;top:631px;width:1px;height:39px;background:#8e9090"></div>
<div class="t" style="left:-120.50px;width:600px;text-align:center;top:645.01px;font-size:9.5px;line-height:12px;color:#222;">7</div>
<div class="t" style="left:198.60px;top:637.01px;font-size:9.5px;line-height:12px;color:#111;">Mitali Electronics</div>
<div class="t" style="left:198.60px;top:654.33px;font-size:8px;line-height:10px;color:#555;">Cash In Hand</div>
<div class="t" style="right:896.50px;text-align:right;top:645.08px;font-size:9.3px;line-height:12px;color:#007000;">4,000.00</div>
<div class="a" style="left:479px;top:397px;width:17px;height:240px;background:#f1f1f1"></div>
<svg class="a" style="left:483.5px;top:403px;" width="8" height="4.5" viewBox="0 0 8 4.5"><path fill="#a3a3a3" d="M0 4.5 L4 0 L8 4.5 Z"/></svg>
<div class="a" style="left:481px;top:414px;width:13px;height:103px;background:#c1c1c1"></div>
<div class="a" style="left:508px;top:365px;width:352px;height:280px;background:#fff;border:1px solid #8a8d90;border-radius:5px"></div>
<div class="a" style="left:511px;top:368px;width:346px;height:23px;background:#31363d;border-radius:4px 4px 0 0"></div>
<svg class="a" style="left:515px;top:374.2px;" width="14.5" height="10" viewBox="0 0 14.5 10"><rect x="0" y="0" width="14.5" height="10" fill="#fff"/><ellipse cx="7.25" cy="5" rx="5" ry="4" fill="#31363d"/><ellipse cx="7.25" cy="5" rx="2.4" ry="3" fill="#fff"/><rect x="6.7" y="3" width="1.2" height="3.6" fill="#31363d"/></svg>
<div class="t" style="left:535.00px;top:373.03px;font-size:11.45px;line-height:14px;color:#fff;-webkit-text-stroke:0.3px #fff;">All Received Voucher</div>
<svg class="a" style="left:805px;top:374.5px;" width="11" height="11" viewBox="0 0 11 11"><path fill="none" stroke="#fff" stroke-width="1.7" d="M9.2 6 A4 4 0 1 1 7.6 2.3"/><path fill="#fff" d="M5.8 0 L10.5 0 L10.5 4.7 Z"/></svg>
<svg class="a" style="left:837px;top:375px;" width="10" height="10" viewBox="0 0 10 10"><path stroke="#fff" stroke-width="1.8" d="M0.8 0.8 L9.2 9.2 M9.2 0.8 L0.8 9.2"/></svg>
<div class="a" style="left:520px;top:397px;width:311px;height:40px;border:1px solid #8e9090"></div>
<div class="a" style="left:551px;top:397px;width:1px;height:39px;background:#8e9090"></div>
<div class="a" style="left:740px;top:397px;width:1px;height:39px;background:#8e9090"></div>
<div class="t" style="left:236.50px;width:600px;text-align:center;top:410.71px;font-size:9.5px;line-height:12px;color:#222;">1</div>
<div class="t" style="left:555.60px;top:402.71px;font-size:9.5px;line-height:12px;color:#111;">Shipping Income A/c</div>
<div class="t" style="left:555.60px;top:420.03px;font-size:8px;line-height:10px;color:#555;">Cash In Hand</div>
<div class="t" style="right:539.50px;text-align:right;top:410.78px;font-size:9.3px;line-height:12px;color:#007000;">5,000.00</div>
<div class="a" style="left:520px;top:436px;width:311px;height:40px;border:1px solid #8e9090"></div>
<div class="a" style="left:551px;top:436px;width:1px;height:39px;background:#8e9090"></div>
<div class="a" style="left:740px;top:436px;width:1px;height:39px;background:#8e9090"></div>
<div class="t" style="left:236.50px;width:600px;text-align:center;top:449.76px;font-size:9.5px;line-height:12px;color:#222;">2</div>
<div class="t" style="left:555.60px;top:441.76px;font-size:9.5px;line-height:12px;color:#111;">Retail Sale A/c</div>
<div class="t" style="left:555.60px;top:459.08px;font-size:8px;line-height:10px;color:#555;">Cash In Hand</div>
<div class="t" style="right:539.50px;text-align:right;top:449.83px;font-size:9.3px;line-height:12px;color:#007000;">30,000.00</div>
<div class="a" style="left:520px;top:475px;width:311px;height:40px;border:1px solid #8e9090"></div>
<div class="a" style="left:551px;top:475px;width:1px;height:39px;background:#8e9090"></div>
<div class="a" style="left:740px;top:475px;width:1px;height:39px;background:#8e9090"></div>
<div class="t" style="left:236.50px;width:600px;text-align:center;top:488.81px;font-size:9.5px;line-height:12px;color:#222;">3</div>
<div class="t" style="left:555.60px;top:480.81px;font-size:9.5px;line-height:12px;color:#111;">Mitali Electronics</div>
<div class="t" style="left:555.60px;top:498.13px;font-size:8px;line-height:10px;color:#555;">Cash In Hand</div>
<div class="t" style="right:539.50px;text-align:right;top:488.88px;font-size:9.3px;line-height:12px;color:#007000;">1,000.00</div>
<div class="a" style="left:520px;top:514px;width:311px;height:40px;border:1px solid #8e9090"></div>
<div class="a" style="left:551px;top:514px;width:1px;height:39px;background:#8e9090"></div>
<div class="a" style="left:740px;top:514px;width:1px;height:39px;background:#8e9090"></div>
<div class="t" style="left:236.50px;width:600px;text-align:center;top:527.86px;font-size:9.5px;line-height:12px;color:#222;">4</div>
<div class="t" style="left:555.60px;top:519.86px;font-size:9.5px;line-height:12px;color:#111;">Mitali Electronics</div>
<div class="t" style="left:555.60px;top:537.18px;font-size:8px;line-height:10px;color:#555;">Cash In Hand</div>
<div class="t" style="right:539.50px;text-align:right;top:527.93px;font-size:9.3px;line-height:12px;color:#007000;">4,000.00</div>
<div class="a" style="left:520px;top:553px;width:311px;height:40px;border:1px solid #8e9090"></div>
<div class="a" style="left:551px;top:553px;width:1px;height:39px;background:#8e9090"></div>
<div class="a" style="left:740px;top:553px;width:1px;height:39px;background:#8e9090"></div>
<div class="t" style="left:236.50px;width:600px;text-align:center;top:566.91px;font-size:9.5px;line-height:12px;color:#222;">5</div>
<div class="t" style="left:555.60px;top:558.91px;font-size:9.5px;line-height:12px;color:#111;">Mitali Electronics From/Other Fee</div>
<div class="t" style="left:555.60px;top:576.23px;font-size:8px;line-height:10px;color:#555;">Cash In Hand</div>
<div class="t" style="right:539.50px;text-align:right;top:566.98px;font-size:9.3px;line-height:12px;color:#007000;">4,000.00</div>
<div class="a" style="left:520px;top:592px;width:311px;height:40px;border:1px solid #8e9090"></div>
<div class="a" style="left:551px;top:592px;width:1px;height:39px;background:#8e9090"></div>
<div class="a" style="left:740px;top:592px;width:1px;height:39px;background:#8e9090"></div>
<div class="t" style="left:236.50px;width:600px;text-align:center;top:605.96px;font-size:9.5px;line-height:12px;color:#222;">6</div>
<div class="t" style="left:555.60px;top:597.96px;font-size:9.5px;line-height:12px;color:#111;">Mitali Electronics</div>
<div class="t" style="left:555.60px;top:615.28px;font-size:8px;line-height:10px;color:#555;">Cash In Hand</div>
<div class="t" style="right:539.50px;text-align:right;top:606.03px;font-size:9.3px;line-height:12px;color:#007000;">40,000.00</div>
<div class="a" style="left:520px;top:631px;width:311px;height:40px;border:1px solid #8e9090"></div>
<div class="a" style="left:551px;top:631px;width:1px;height:39px;background:#8e9090"></div>
<div class="a" style="left:740px;top:631px;width:1px;height:39px;background:#8e9090"></div>
<div class="t" style="left:236.50px;width:600px;text-align:center;top:645.01px;font-size:9.5px;line-height:12px;color:#222;">7</div>
<div class="t" style="left:555.60px;top:637.01px;font-size:9.5px;line-height:12px;color:#111;">Mitali Electronics</div>
<div class="t" style="left:555.60px;top:654.33px;font-size:8px;line-height:10px;color:#555;">Cash In Hand</div>
<div class="t" style="right:539.50px;text-align:right;top:645.08px;font-size:9.3px;line-height:12px;color:#007000;">4,000.00</div>
<div class="a" style="left:836px;top:397px;width:17px;height:240px;background:#f1f1f1"></div>
<svg class="a" style="left:840.5px;top:403px;" width="8" height="4.5" viewBox="0 0 8 4.5"><path fill="#a3a3a3" d="M0 4.5 L4 0 L8 4.5 Z"/></svg>
<div class="a" style="left:838px;top:414px;width:13px;height:103px;background:#c1c1c1"></div>
<div class="a" style="left:860px;top:365px;width:352px;height:280px;background:#fff;border:1px solid #8a8d90;border-radius:5px"></div>
<div class="a" style="left:863px;top:368px;width:347px;height:23px;background:#31363d;border-radius:4px 4px 0 0"></div>
<svg class="a" style="left:867px;top:374.2px;" width="14.5" height="10" viewBox="0 0 14.5 10"><rect x="0" y="0" width="14.5" height="10" fill="#fff"/><ellipse cx="7.25" cy="5" rx="5" ry="4" fill="#31363d"/><ellipse cx="7.25" cy="5" rx="2.4" ry="3" fill="#fff"/><rect x="6.7" y="3" width="1.2" height="3.6" fill="#31363d"/></svg>
<div class="t" style="left:887.00px;top:373.03px;font-size:11.45px;line-height:14px;color:#fff;-webkit-text-stroke:0.3px #fff;">All Payment Voucher</div>
<svg class="a" style="left:1158px;top:374.5px;" width="11" height="11" viewBox="0 0 11 11"><path fill="none" stroke="#fff" stroke-width="1.7" d="M9.2 6 A4 4 0 1 1 7.6 2.3"/><path fill="#fff" d="M5.8 0 L10.5 0 L10.5 4.7 Z"/></svg>
<svg class="a" style="left:1190px;top:375px;" width="10" height="10" viewBox="0 0 10 10"><path stroke="#fff" stroke-width="1.8" d="M0.8 0.8 L9.2 9.2 M9.2 0.8 L0.8 9.2"/></svg>
<div class="a" style="left:872px;top:397px;width:312px;height:25px;border:1px solid #8e9090"></div>
<div class="a" style="left:904px;top:397px;width:1px;height:24px;background:#8e9090"></div>
<div class="a" style="left:1093px;top:397px;width:1px;height:24px;background:#8e9090"></div>
<div class="t" style="left:589.00px;width:600px;text-align:center;top:402.91px;font-size:9.5px;line-height:12px;color:#222;">1</div>
<div class="t" style="left:908.60px;top:402.91px;font-size:9.5px;line-height:12px;color:#111;">Jannat</div>
<div class="t" style="right:187.00px;text-align:right;top:402.98px;font-size:9.3px;line-height:12px;color:#f00;">5,000.00</div>
<div class="a" style="left:872px;top:421px;width:312px;height:25px;border:1px solid #8e9090"></div>
<div class="a" style="left:904px;top:421px;width:1px;height:24px;background:#8e9090"></div>
<div class="a" style="left:1093px;top:421px;width:1px;height:24px;background:#8e9090"></div>
<div class="t" style="left:589.00px;width:600px;text-align:center;top:426.96px;font-size:9.5px;line-height:12px;color:#222;">2</div>
<div class="t" style="left:908.60px;top:426.96px;font-size:9.5px;line-height:12px;color:#111;">Cash In Hand</div>
<div class="a" style="left:872px;top:445px;width:312px;height:25px;border:1px solid #8e9090"></div>
<div class="a" style="left:904px;top:445px;width:1px;height:24px;background:#8e9090"></div>
<div class="a" style="left:1093px;top:445px;width:1px;height:24px;background:#8e9090"></div>
<div class="t" style="left:589.00px;width:600px;text-align:center;top:451.01px;font-size:9.5px;line-height:12px;color:#222;">3</div>
<div class="t" style="left:908.60px;top:451.01px;font-size:9.5px;line-height:12px;color:#111;">MIM ELECTRONICS</div>
<div class="t" style="right:187.00px;text-align:right;top:451.08px;font-size:9.3px;line-height:12px;color:#f00;">3,000.00</div>
<div class="a" style="left:872px;top:469px;width:312px;height:25px;border:1px solid #8e9090"></div>
<div class="a" style="left:904px;top:469px;width:1px;height:24px;background:#8e9090"></div>
<div class="a" style="left:1093px;top:469px;width:1px;height:24px;background:#8e9090"></div>
<div class="t" style="left:589.00px;width:600px;text-align:center;top:475.06px;font-size:9.5px;line-height:12px;color:#222;">4</div>
<div class="t" style="left:908.60px;top:475.06px;font-size:9.5px;line-height:12px;color:#111;">Cash In Hand</div>
<div class="a" style="left:872px;top:493px;width:312px;height:25px;border:1px solid #8e9090"></div>
<div class="a" style="left:904px;top:493px;width:1px;height:24px;background:#8e9090"></div>
<div class="a" style="left:1093px;top:493px;width:1px;height:24px;background:#8e9090"></div>
<div class="t" style="left:589.00px;width:600px;text-align:center;top:499.11px;font-size:9.5px;line-height:12px;color:#222;">5</div>
<div class="t" style="left:908.60px;top:499.11px;font-size:9.5px;line-height:12px;color:#111;">Jannat</div>
<div class="t" style="right:187.00px;text-align:right;top:499.18px;font-size:9.3px;line-height:12px;color:#f00;">2,000.00</div>
<div class="a" style="left:872px;top:517px;width:312px;height:25px;border:1px solid #8e9090"></div>
<div class="a" style="left:904px;top:517px;width:1px;height:24px;background:#8e9090"></div>
<div class="a" style="left:1093px;top:517px;width:1px;height:24px;background:#8e9090"></div>
<div class="t" style="left:589.00px;width:600px;text-align:center;top:523.16px;font-size:9.5px;line-height:12px;color:#222;">6</div>
<div class="t" style="left:908.60px;top:523.16px;font-size:9.5px;line-height:12px;color:#111;">Cash In Hand</div>
<div class="a" style="left:872px;top:541px;width:312px;height:25px;border:1px solid #8e9090"></div>
<div class="a" style="left:904px;top:541px;width:1px;height:24px;background:#8e9090"></div>
<div class="a" style="left:1093px;top:541px;width:1px;height:24px;background:#8e9090"></div>
<div class="t" style="left:589.00px;width:600px;text-align:center;top:547.21px;font-size:9.5px;line-height:12px;color:#222;">7</div>
<div class="t" style="left:908.60px;top:547.21px;font-size:9.5px;line-height:12px;color:#111;">Jannat</div>
<div class="t" style="right:187.00px;text-align:right;top:547.28px;font-size:9.3px;line-height:12px;color:#f00;">2,000.00</div>
<div class="a" style="left:872px;top:565px;width:312px;height:25px;border:1px solid #8e9090"></div>
<div class="a" style="left:904px;top:565px;width:1px;height:24px;background:#8e9090"></div>
<div class="a" style="left:1093px;top:565px;width:1px;height:24px;background:#8e9090"></div>
<div class="t" style="left:589.00px;width:600px;text-align:center;top:571.26px;font-size:9.5px;line-height:12px;color:#222;">8</div>
<div class="t" style="left:908.60px;top:571.26px;font-size:9.5px;line-height:12px;color:#111;">Cash In Hand</div>
<div class="a" style="left:872px;top:589px;width:312px;height:25px;border:1px solid #8e9090"></div>
<div class="a" style="left:904px;top:589px;width:1px;height:24px;background:#8e9090"></div>
<div class="a" style="left:1093px;top:589px;width:1px;height:24px;background:#8e9090"></div>
<div class="t" style="left:589.00px;width:600px;text-align:center;top:595.31px;font-size:9.5px;line-height:12px;color:#222;">9</div>
<div class="t" style="left:908.60px;top:595.31px;font-size:9.5px;line-height:12px;color:#111;">Mitali Electronics</div>
<div class="t" style="right:187.00px;text-align:right;top:595.38px;font-size:9.3px;line-height:12px;color:#f00;">4,000.00</div>
<div class="a" style="left:872px;top:613px;width:312px;height:26px;border:1px solid #8e9090"></div>
<div class="a" style="left:904px;top:613px;width:1px;height:25px;background:#8e9090"></div>
<div class="a" style="left:1093px;top:613px;width:1px;height:25px;background:#8e9090"></div>
<div class="t" style="left:589.00px;width:600px;text-align:center;top:619.36px;font-size:9.5px;line-height:12px;color:#222;">10</div>
<div class="t" style="left:908.60px;top:619.36px;font-size:9.5px;line-height:12px;color:#111;">Cash In Hand</div>
<div class="a" style="left:872px;top:638px;width:312px;height:25px;border:1px solid #8e9090"></div>
<div class="a" style="left:904px;top:638px;width:1px;height:24px;background:#8e9090"></div>
<div class="a" style="left:1093px;top:638px;width:1px;height:24px;background:#8e9090"></div>
<div class="t" style="left:589.00px;width:600px;text-align:center;top:643.41px;font-size:9.5px;line-height:12px;color:#222;">11</div>
<div class="t" style="left:908.60px;top:643.41px;font-size:9.5px;line-height:12px;color:#111;">Jannat</div>
<div class="a" style="left:1189px;top:397px;width:17px;height:240px;background:#f1f1f1"></div>
<svg class="a" style="left:1193.5px;top:403px;" width="8" height="4.5" viewBox="0 0 8 4.5"><path fill="#a3a3a3" d="M0 4.5 L4 0 L8 4.5 Z"/></svg>
<div class="a" style="left:1191px;top:414px;width:13px;height:173px;background:#c1c1c1"></div>
<div class="a" style="left:1220px;top:40px;width:1px;height:595px;background:#2f6b32"></div>
<div class="a" style="left:1221px;top:40px;width:145px;height:595px;background:#fff"></div>
<div class="a" style="left:1221px;top:40px;width:145px;height:26px;background:#fdefdc"></div>
<div class="a" style="left:1221px;top:66px;width:145px;height:1px;background:#c9d0dd"></div>
<div class="t" style="left:993.70px;width:600px;text-align:center;top:42.26px;font-size:10.8px;line-height:14px;color:#000;">DASHBOARD</div>
<div class="a" style="left:1221px;top:94px;width:145px;height:1px;background:#dedede"></div>
<svg class="a" style="left:1231.2px;top:74.8px;" width="13" height="11" viewBox="0 0 13 11"><path fill="#444" d="M6.5 0 L13 5.6 L11.3 5.6 L11.3 11 L7.9 11 L7.9 7.5 L5.1 7.5 L5.1 11 L1.7 11 L1.7 5.6 L0 5.6 Z"/></svg>
<div class="t" style="left:1249.70px;top:73.05px;font-size:11.4px;line-height:14px;color:#444;">ERP SOLUTION</div>
<div class="a" style="left:1221px;top:122px;width:145px;height:1px;background:#dedede"></div>
<svg class="a" style="left:1231.2px;top:102.8px;" width="13" height="11" viewBox="0 0 13 11"><path fill="#444" d="M6.5 0 L13 5.6 L11.3 5.6 L11.3 11 L7.9 11 L7.9 7.5 L5.1 7.5 L5.1 11 L1.7 11 L1.7 5.6 L0 5.6 Z"/></svg>
<div class="t" style="left:1249.70px;top:101.05px;font-size:11.4px;line-height:14px;color:#444;">ERP SOLUTION</div>
<div class="a" style="left:1221px;top:150px;width:145px;height:1px;background:#dedede"></div>
<svg class="a" style="left:1231.2px;top:130.8px;" width="13" height="11" viewBox="0 0 13 11"><path fill="#444" d="M6.5 0 L13 5.6 L11.3 5.6 L11.3 11 L7.9 11 L7.9 7.5 L5.1 7.5 L5.1 11 L1.7 11 L1.7 5.6 L0 5.6 Z"/></svg>
<div class="t" style="left:1249.70px;top:129.05px;font-size:11.4px;line-height:14px;color:#444;">Mitali Electronics (IT Branch)</div>
<div class="a" style="left:1221px;top:178px;width:145px;height:1px;background:#dedede"></div>
<svg class="a" style="left:1231.2px;top:158.8px;" width="13" height="11" viewBox="0 0 13 11"><path fill="#444" d="M6.5 0 L13 5.6 L11.3 5.6 L11.3 11 L7.9 11 L7.9 7.5 L5.1 7.5 L5.1 11 L1.7 11 L1.7 5.6 L0 5.6 Z"/></svg>
<div class="t" style="left:1249.70px;top:157.05px;font-size:11.4px;line-height:14px;color:#444;">WC Branch</div>
<div class="a" style="left:1221px;top:206px;width:145px;height:1px;background:#dedede"></div>
<svg class="a" style="left:1231.2px;top:186.8px;" width="13" height="11" viewBox="0 0 13 11"><path fill="#444" d="M6.5 0 L13 5.6 L11.3 5.6 L11.3 11 L7.9 11 L7.9 7.5 L5.1 7.5 L5.1 11 L1.7 11 L1.7 5.6 L0 5.6 Z"/></svg>
<div class="t" style="left:1249.70px;top:185.05px;font-size:11.4px;line-height:14px;color:#444;">Mitali Electronics (Corporate)</div>
<div class="a" style="left:1221px;top:234px;width:145px;height:1px;background:#dedede"></div>
<svg class="a" style="left:1231.2px;top:214.8px;" width="13" height="11" viewBox="0 0 13 11"><path fill="#444" d="M6.5 0 L13 5.6 L11.3 5.6 L11.3 11 L7.9 11 L7.9 7.5 L5.1 7.5 L5.1 11 L1.7 11 L1.7 5.6 L0 5.6 Z"/></svg>
<div class="t" style="left:1249.70px;top:213.05px;font-size:11.4px;line-height:14px;color:#444;">Mitali Electronics(Vision)</div>
<div class="a" style="left:1221px;top:262px;width:145px;height:1px;background:#dedede"></div>
<svg class="a" style="left:1231px;top:245px;" width="6" height="7" viewBox="0 0 6 7"><path fill="none" stroke="#777" stroke-width="1" d="M1 0.5 L4.5 3.5 L1 6.5"/></svg>
<div class="t" style="left:1249.70px;top:241.05px;font-size:11.4px;line-height:14px;color:#444;">Top Sheet</div>
<div class="a" style="left:1221px;top:290px;width:145px;height:1px;background:#dedede"></div>
<svg class="a" style="left:1231px;top:273px;" width="6" height="7" viewBox="0 0 6 7"><path fill="none" stroke="#777" stroke-width="1" d="M1 0.5 L4.5 3.5 L1 6.5"/></svg>
<div class="t" style="left:1249.70px;top:269.05px;font-size:11.4px;line-height:14px;color:#444;">Cash Book</div>
<div class="a" style="left:1221px;top:318px;width:145px;height:1px;background:#dedede"></div>
<svg class="a" style="left:1231px;top:301px;" width="6" height="7" viewBox="0 0 6 7"><path fill="none" stroke="#777" stroke-width="1" d="M1 0.5 L4.5 3.5 L1 6.5"/></svg>
<div class="t" style="left:1249.70px;top:297.05px;font-size:11.4px;line-height:14px;color:#444;">Day Close</div>
<div class="a" style="left:1221px;top:346px;width:145px;height:1px;background:#dedede"></div>
<svg class="a" style="left:1231px;top:329px;" width="6" height="7" viewBox="0 0 6 7"><path fill="none" stroke="#777" stroke-width="1" d="M1 0.5 L4.5 3.5 L1 6.5"/></svg>
<div class="t" style="left:1249.70px;top:325.05px;font-size:11.4px;line-height:14px;color:#444;">Day Book</div>
<div class="a" style="left:1221px;top:374px;width:145px;height:1px;background:#dedede"></div>
<svg class="a" style="left:1231px;top:357px;" width="6" height="7" viewBox="0 0 6 7"><path fill="none" stroke="#777" stroke-width="1" d="M1 0.5 L4.5 3.5 L1 6.5"/></svg>
<div class="t" style="left:1249.70px;top:353.05px;font-size:11.4px;line-height:14px;color:#444;">Transaction Waiting</div>
</body></html>
